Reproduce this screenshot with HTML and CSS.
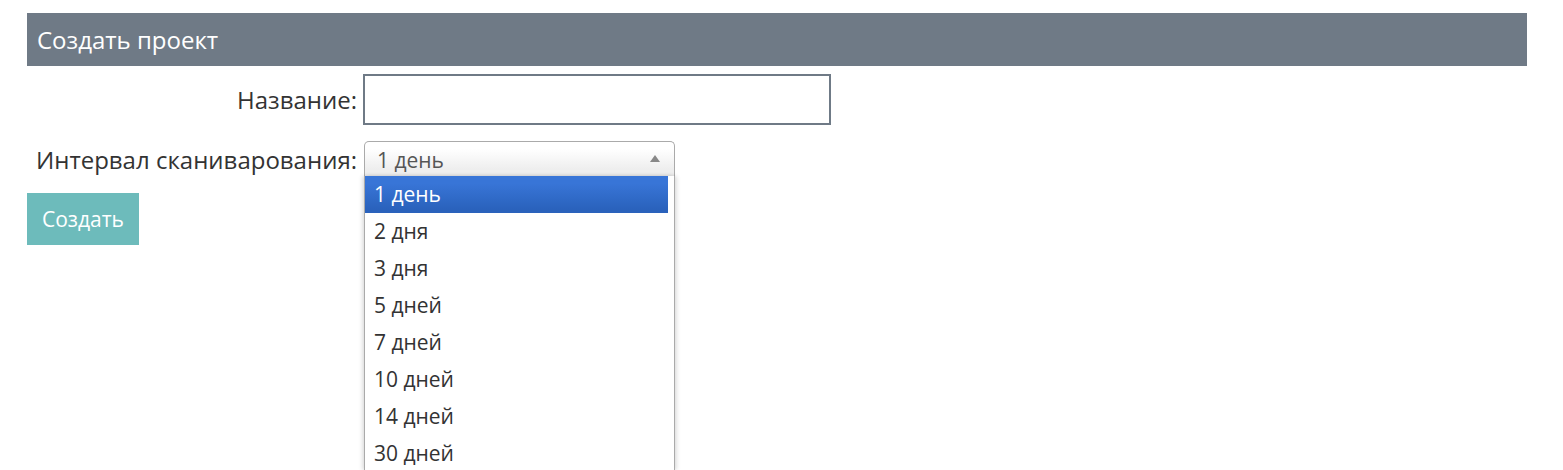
FILE: index.html
```html
<!DOCTYPE html>
<html lang="ru">
<head>
    <meta charset="UTF-8">
    <title>Создать проект</title>
    <link rel="stylesheet" href="styles.css">
</head>
<body>
    <div class="page">
        <div class="panel-title">Создать проект</div>
        <form class="project-form">
            <label class="form-label" for="name">Название:</label>
            <div class="form-field">
                <input type="text" id="name" class="text-input">
            </div>

            <label class="form-label">Интервал сканиварования:</label>
            <div class="form-field">
                <div class="chosen">
                    <div class="chosen-single">
                        <span>1 день</span>
                        <span class="chosen-arrow"></span>
                    </div>
                    <ul class="chosen-results">
                        <li class="highlighted">1 день</li>
                        <li>2 дня</li>
                        <li>3 дня</li>
                        <li>5 дней</li>
                        <li>7 дней</li>
                        <li>10 дней</li>
                        <li>14 дней</li>
                        <li>30 дней</li>
                    </ul>
                </div>
            </div>

            <div class="form-actions">
                <button type="button" class="btn">Создать</button>
            </div>
        </form>
    </div>
</body>
</html>
```

FILE: styles.css
```css
html, body {
    height: 100%;
}
body {
    margin: 0;
    font-family: "Open Sans", "Liberation Sans", sans-serif;
    color: #333;
    background: #fff;
}
.page {
    box-sizing: border-box;
    width: 1527px;
    height: 100%;
    padding: 13px 0 0 27px;
}
.panel-title {
    height: 53px;
    line-height: 53px;
    padding-left: 10px;
    background-color: #6f7a86;
    color: #fff;
    font-size: 24px;
}
.project-form {
    display: grid;
    grid-template-columns: 336px 1fr;
    row-gap: 16px;
    margin-top: 8px;
    align-items: center;
}
.form-label {
    text-align: right;
    padding-right: 6px;
    font-size: 24px;
    color: #333;
}
.text-input {
    display: block;
    box-sizing: border-box;
    width: 468px;
    height: 51px;
    margin: 0;
    border: 2px solid #6f7a86;
    padding: 0 10px;
    font: inherit;
    font-size: 21px;
    outline: none;
}
.chosen {
    position: relative;
    width: 311px;
    margin-left: 1px;
    font-size: 21px;
}
.chosen-single {
    box-sizing: border-box;
    display: flex;
    align-items: center;
    justify-content: space-between;
    height: 36px;
    padding: 2px 14px 0 12px;
    border: 1px solid #aaa;
    border-bottom-color: #ddd;
    border-radius: 5px 5px 0 0;
    background: linear-gradient(#fff 20%, #eee 80%);
    color: #555;
}
.chosen-arrow {
    width: 0;
    height: 0;
    margin-top: -4px;
    border-left: 5px solid transparent;
    border-right: 5px solid transparent;
    border-bottom: 7px solid #888;
}
/* list is cut at the bottom of the window, as in the open dropdown */
.chosen-results {
    position: absolute;
    top: 35px;
    left: 0;
    box-sizing: border-box;
    width: 311px;
    height: 294px;
    overflow: hidden;
    margin: 0;
    padding: 0 6px 0 0;
    list-style: none;
    background: #fff;
    border: 1px solid #aaa;
    border-top: 0;
    border-bottom: 0;
    box-shadow: 2px 0 4px rgba(0, 0, 0, 0.12), -2px 0 4px rgba(0, 0, 0, 0.12);
}
.chosen-results li {
    height: 37px;
    line-height: 37px;
    padding-left: 9px;
    color: #333;
}
.chosen-results li.highlighted {
    background: linear-gradient(#3875d7 20%, #2a62bc 90%);
    color: #fff;
}
.form-actions {
    grid-column: 1 / 3;
}
.btn {
    display: block;
    width: 112px;
    height: 52px;
    border: none;
    padding: 0;
    background-color: #6dbbbb;
    color: #fff;
    font-family: inherit;
    font-size: 21px;
    cursor: pointer;
}
```
